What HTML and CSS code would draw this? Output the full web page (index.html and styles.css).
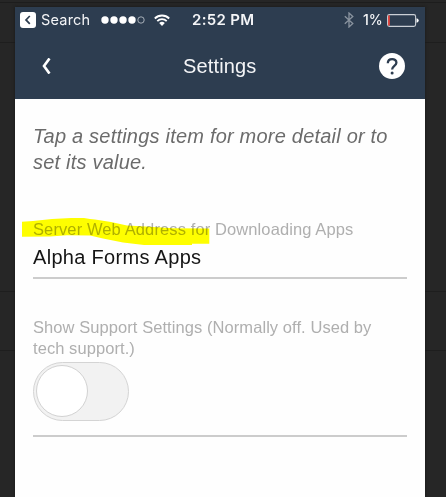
FILE: index.html
```html
<!DOCTYPE html>
<html lang="en">
<head>
<meta charset="utf-8">
<title>Settings</title>
<link rel="stylesheet" href="styles.css">
</head>
<body>
<div class="phone">
  <header class="top">
    <div class="status">
      <svg class="back-app" viewBox="0 0 16 16"><rect width="16" height="16" rx="3" fill="#fff"/><path d="M9.8 4 6 7.9l3.8 3.9" fill="none" stroke="#2d3d50" stroke-width="1.7"/></svg>
      <span class="search">Search</span>
      <svg class="signal" viewBox="0 0 44 8"><g fill="#fff"><circle cx="4" cy="4" r="3.7"/><circle cx="13" cy="4" r="3.7"/><circle cx="22" cy="4" r="3.7"/><circle cx="31" cy="4" r="3.7"/></g><circle cx="40" cy="4" r="3.2" fill="none" stroke="#c5cbd2" stroke-width=".8"/></svg>
      <svg class="wifi" viewBox="0 0 16 12"><g fill="none" stroke="#fff" stroke-width="1.8"><path d="M.8 4.5a10.2 10.2 0 0 1 14.4 0"/><path d="M3.3 7.1a6.6 6.6 0 0 1 9.4 0"/></g><path d="M8 12 5.2 9.1a4 4 0 0 1 5.6 0z" fill="#fff"/></svg>
      <span class="time">2:52 PM</span>
      <svg class="bluetooth" viewBox="0 0 10 16"><path d="m.8 4.2 8 7.4L5 15V1l3.8 3.4-8 7.4" fill="none" stroke="#8a949f" stroke-width="1.3"/></svg>
      <span class="percent">1%</span>
      <svg class="battery" viewBox="0 0 32 13"><rect x=".6" y=".6" width="28" height="11.8" rx="1.8" fill="none" stroke="#cbd0d6" stroke-width="1.1"/><path d="M1.1 1.4h1.7v10.2H1.1z" fill="#f0443c"/><path d="M29.5 4.2q2.2.4 2.2 2.3t-2.2 2.3z" fill="#fff"/></svg>
    </div>
    <div class="bar">
      <svg class="back" viewBox="0 0 10 16"><path d="M8.5.4 3 8l5.5 7.6" fill="none" stroke="#fff" stroke-width="2.6"/></svg>
      <h1 class="title">Settings</h1>
      <svg class="help" viewBox="0 0 26 26"><circle cx="13" cy="13" r="13" fill="#fff"/><path d="M8.8 10.2c.1-5.5 8.7-5.3 8.6-.4 0 3-4.3 3.3-4.3 6.7" fill="none" stroke="#2d3d50" stroke-width="2.3"/><circle cx="13.1" cy="19.9" r="1.5" fill="#2d3d50"/></svg>
    </div>
  </header>
  <main class="content">
    <p class="intro">Tap a settings item for more detail or to<br>set its value.</p>
    <section class="item address">
      <div class="label">Server Web Address for Downloading Apps</div>
      <div class="value">Alpha Forms Apps</div>
      <svg class="marker" viewBox="0 0 188 28"><path d="M0 4.7 11 4 30 2 49 1h13l6 1 5 .5L89 5l16 3.5 23 1.3 23 1.5 36.3.3v15.1H170v1.3h-48l-21-2.5-20-4-13-3-23-.3-17 1.4L0 19.7z" fill="#ff0"/></svg>
    </section>
    <section class="item support">
      <div class="label support-label">Show Support Settings (Normally off. Used by<br>tech support.)</div>
      <div class="toggle"><div class="knob"></div></div>
    </section>
  </main>
</div>
</body>
</html>
```
FILE: styles.css
```css
* { box-sizing: border-box; }
body {
  margin: 0;
  height: 497px;
  overflow: hidden;
  padding: 7px 21px 0 15px;
  background:
    linear-gradient(#1d1d1d, #1d1d1d) 0 2px / 100% 1px no-repeat,
    linear-gradient(#1e1e1e, #1e1e1e) 0 42px / 100% 1px no-repeat,
    linear-gradient(#1e1e1e, #1e1e1e) 0 291px / 100% 1px no-repeat,
    linear-gradient(#1e1e1e, #1e1e1e) 0 350px / 100% 1px no-repeat,
    #262626;
  font-family: "Liberation Sans", Arial, sans-serif;
}
.phone { height: 490px; background: #fefefe; box-shadow: 0 0 3px #181818; }
.top { height: 92px; background: #2d3d50; color: #f4f5f7; }
.status { display: flex; align-items: center; height: 26px; padding-left: 5px; font: 15px/26px Inter, sans-serif; }
.status svg { flex: none; }
.back-app { width: 16px; height: 16px; }
.search { width: 61px; padding-left: 5px; font-size: 14.5px; letter-spacing: .2px; white-space: nowrap; }
.signal { width: 44px; height: 8px; margin-left: 4px; }
.wifi { width: 16px; height: 12px; margin-left: 9px; }
.time { width: 152px; padding-left: 22px; font-size: 15px; font-weight: 600; letter-spacing: .3px; white-space: nowrap; }
.bluetooth { width: 10px; height: 16px; margin-left: 22px; }
.percent { width: 24px; margin-left: 9px; font-size: 14px; font-weight: 500; white-space: nowrap; }
.battery { width: 32px; height: 13px; }
.bar { display: flex; align-items: center; height: 66px; padding: 0 20px 0 26px; }
.back { width: 10px; height: 16px; }
.title { flex: 1; margin: 0 0 0 132px; font-size: 20px; font-weight: 400; line-height: 24px; letter-spacing: .15px; }
.help { width: 26px; height: 26px; }
.content { padding: 24px 18px 0; }
.intro { margin: 0; color: #6b6b6b; font-size: 20px; font-style: italic; line-height: 26px; letter-spacing: .21px; white-space: nowrap; }
.item { position: relative; border-bottom: 2px solid #ccc; }
.label { color: #afafaf; font-size: 16.5px; line-height: 21px; letter-spacing: .11px; white-space: nowrap; }
.support-label { letter-spacing: .07px; }
.address { height: 60px; margin-top: 44px; }
.value { margin-top: 4px; color: #151515; font-size: 20px; line-height: 26px; letter-spacing: .31px; }
.marker { position: absolute; left: -11px; top: -2px; width: 188px; height: 28px; mix-blend-mode: multiply; }
.support { height: 120px; margin-top: 38px; }
.toggle { width: 96px; height: 59px; margin-top: 3px; padding: 2px; border: 1px solid #d4d4d4; border-radius: 30px; background: #f2f2f2; }
.knob { width: 52px; height: 52px; border: 1px solid #d2d2d2; border-radius: 50%; background: #fff; }
```
